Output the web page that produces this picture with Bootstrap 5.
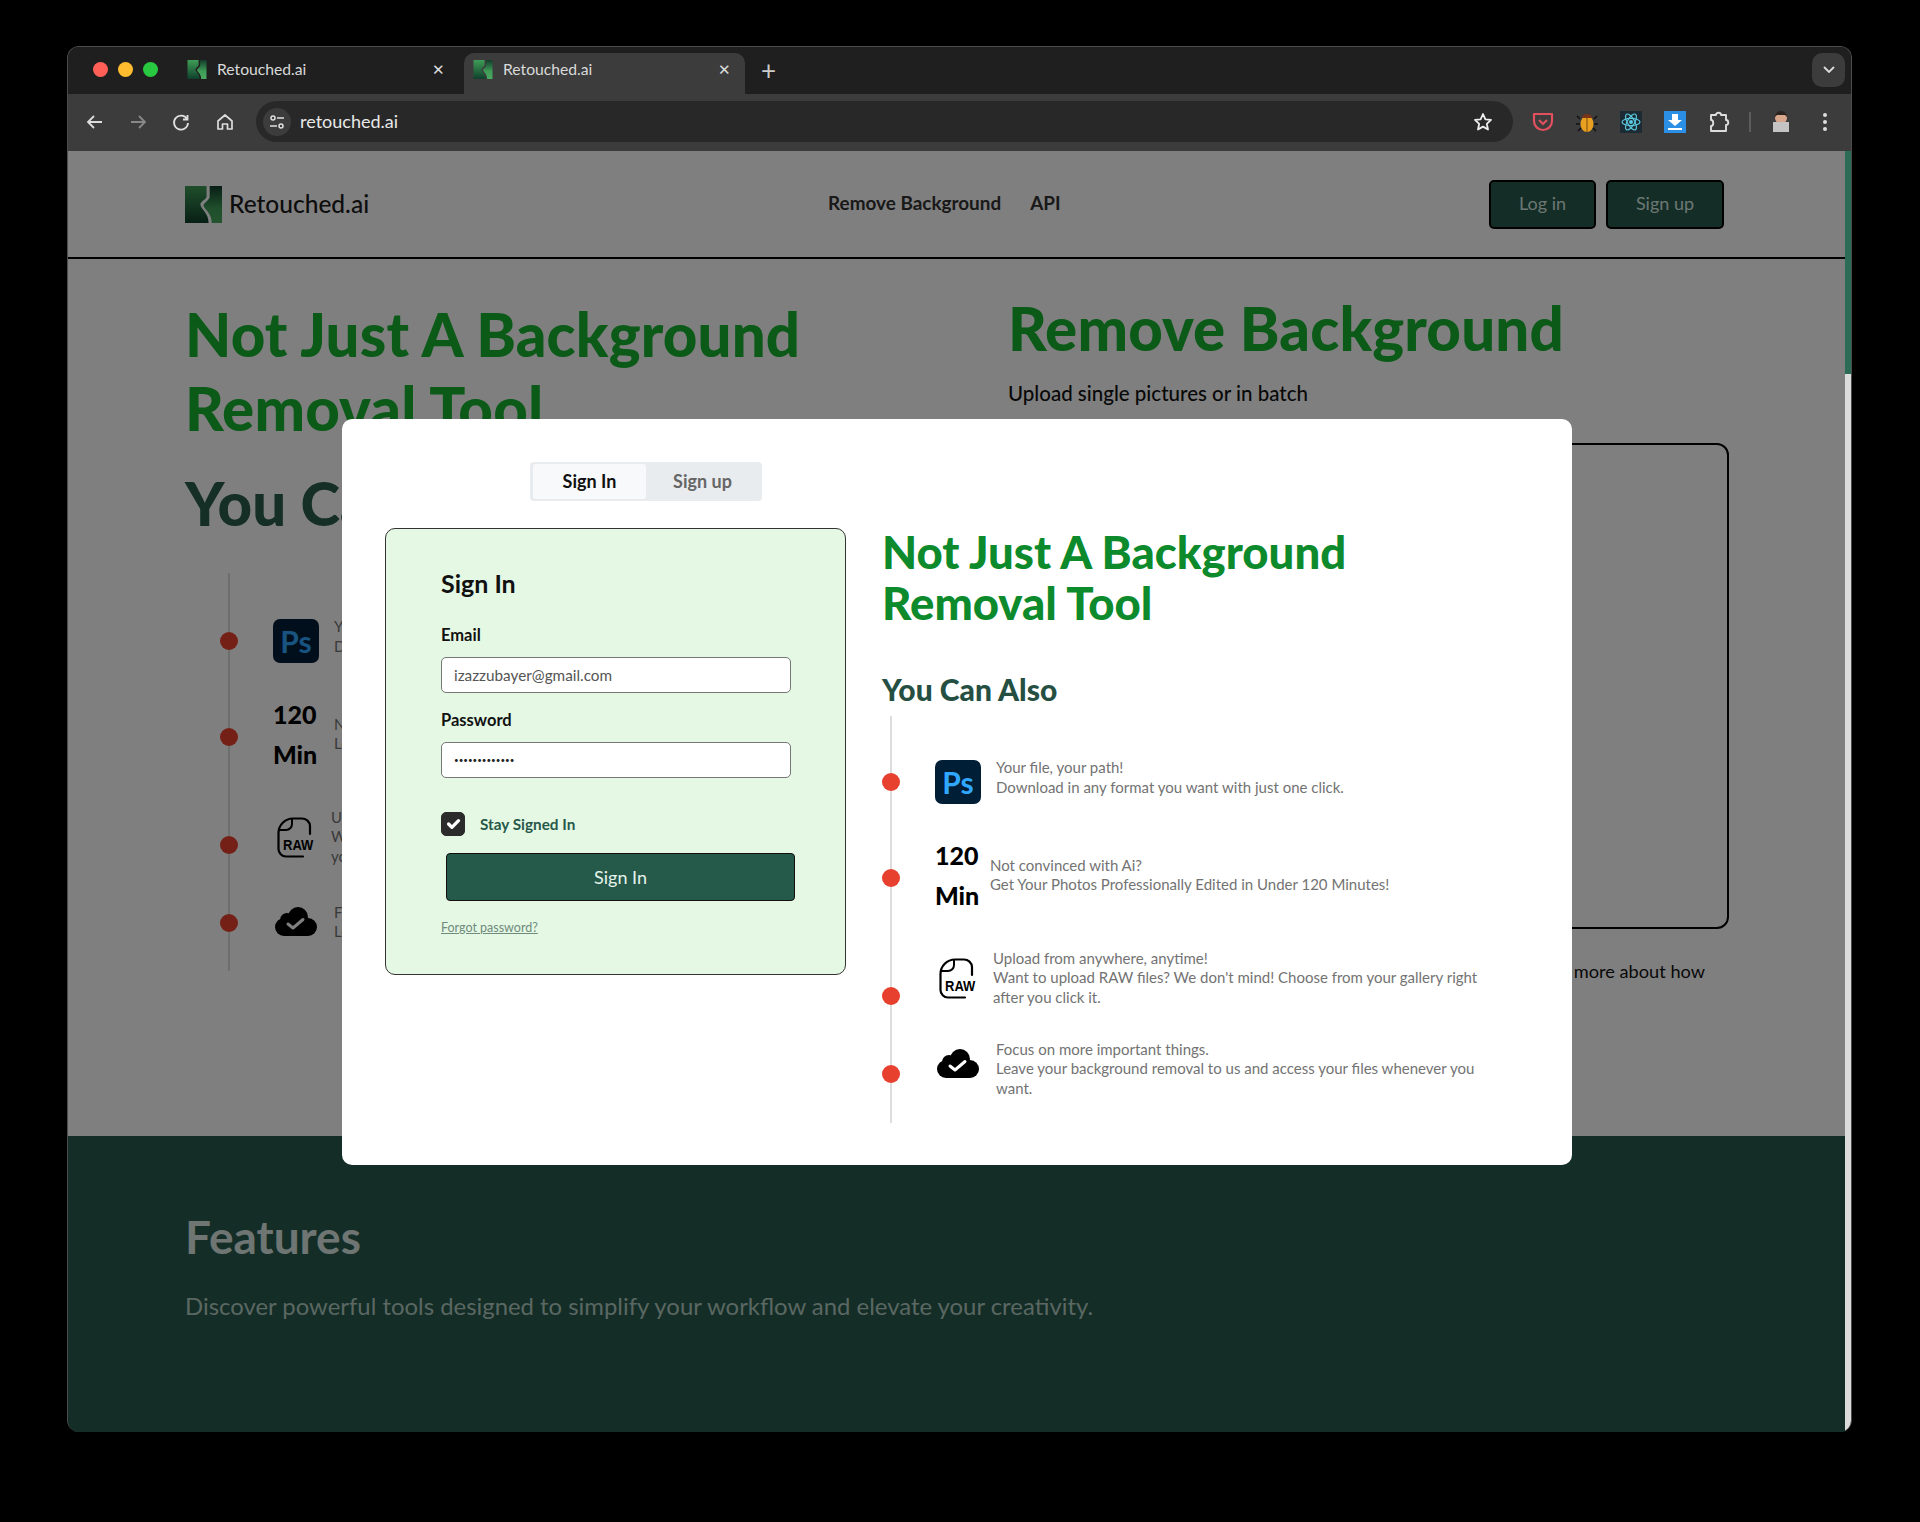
<!DOCTYPE html>
<html lang="en">
<head>
  <meta charset="UTF-8" />
  <meta name="viewport" content="width=device-width, initial-scale=1.0" />
  <title>Retouched.ai</title>
  <link href="https://cdn.jsdelivr.net/npm/bootstrap@5.3.0/dist/css/bootstrap.min.css" rel="stylesheet" />
  <style>
    body { background: #000; font-family: "Lato", sans-serif; margin: 0; padding: 46px 67px 90px; }
    .app-window { width: 1785px; height: 1386px; border-radius: 12px; overflow: hidden; border: 1px solid #4c4c4c; border-bottom: 0; background: #1f1f1f; }

    /* browser chrome */
    .tab-strip { height: 47px; background: #1f1f1f; padding-right: 6px; }
    .traffic { width: 110px; padding-left: 25px; gap: 10px; height: 45px; }
    .traffic span { width: 15px; height: 15px; border-radius: 50%; }
    .light-r { background: #ff5f57; }
    .light-y { background: #febc2e; }
    .light-g { background: #28c840; }
    .chrome-tab { width: 281px; height: 41px; margin-right: 5px; padding: 0 14px 8px 9px; color: #d9d9d9; font-size: 15.700px; border-radius: 10px 10px 0 0; }
    .chrome-tab.is-active { background: #3c3c3c; }
    .chrome-tab svg { width: 20px; height: 19px; margin-right: 10px; }
    .tab-close { margin-left: auto; font-size: 15px; color: #ddd; }
    .tab-plus { font-size: 26px; color: #ccc; margin-left: 11px; padding-bottom: 11px; line-height: 1; }
    .tab-menu { width: 33px; height: 34px; background: #3c3c3c; border-radius: 10px; margin-bottom: 7px; }
    .tool-bar { height: 57px; background: #3c3c3c; padding: 0 0 2px 16.500px; }
    .tool-btn { width: 43.400px; }
    .tool-btn svg { display: block; }
    .addr-bar { width: 1257px; height: 41px; margin-left: -2px; background: #282828; border-radius: 21px; padding: 0 20px 0 7px; color: #e8e8e8; font-size: 18px; }
    .addr-tune { width: 28px; height: 28px; border-radius: 50%; background: #3c3c3c; margin-right: 9px; }
    .ext-list { margin-left: 8px; }
    .ext-btn { width: 44px; }
    .ext-btn svg { display: block; margin: 0 auto; }
    .ext-sep { width: 2px; height: 20px; background: #5c5c5c; margin: 0 8px; }

    /* site */
    .page-area { height: 1281px; }
    .page-scroll { width: 6px; background: #dcdcdc; }
    .page-thumb { height: 223px; background: #2c6c56; }
    .site-nav { height: 108px; background: #fff; border-bottom: 2px solid #000; padding: 0 121px 0 117px; }
    .brand-name { font-size: 24.500px; color: #1a1a1a; margin-left: 7px; font-weight: 500; }
    .site-link { font-size: 18.900px; font-weight: 700; color: #333; margin-right: 25px; text-decoration: none; }
    .site-links { margin-left: 459px; margin-bottom: 2px; }
    .btn-site { background: #285a4c; border: 2px solid #000; border-radius: 5px; height: 49px; padding-bottom: 8px; font-size: 18px; color: #d8ece4; }
    .btn-site-a { width: 107px; margin-right: 10px; }
    .btn-site-b { width: 118px; }
    .hero { height: 877px; background: #fff; padding: 38px 0 0 117px; }
    .hero-left { width: 823px; }
    .hero-title { font-size: 60px; line-height: 74px; font-weight: 900; letter-spacing: .15px; color: #16b430; margin: 0; }
    .hero-also { font-size: 60px; line-height: 60px; font-weight: 900; color: #2a5c4d; margin: 28px 0 40px; }
    .hero-right { width: 721px; margin-top: -6px; }
    .hero-sub { font-size: 20.500px; font-weight: 500; color: #111; margin: 13px 0 34px; }
    .drop-box { height: 486px; border: 2.500px solid #000; border-radius: 12px; }
    .hero-note { font-size: 18.200px; color: #111; margin-top: 29px; padding-right: 24px; text-align: right; }
    .site-foot { height: 297px; background: #285a4c; padding: 74px 0 0 117px; }
    .foot-title { font-size: 46px; font-weight: 700; color: #dcebe6; margin: 0 0 24px; line-height: 54px; }
    .foot-text { font-size: 23.900px; color: #b4cec4; margin: 0; }

    /* timeline, same block on the page and in the dialog */
    .time-line { display: flow-root; }
    .time-line::before { content: ""; position: absolute; left: 8px; top: 0; bottom: 0; width: 2px; background: #ddd; }
    .time-row { z-index: 1; }
    .time-dot { width: 18px; height: 18px; border-radius: 50%; background: #e8402f; margin-right: 35px; flex: none; }
    .time-ico { flex: none; color: #000; }
    .time-txt { font-size: 15px; line-height: 19.400px; color: #737373; white-space: nowrap; }
    .ps-ico { width: 46px; height: 44px; border-radius: 7px; background: #001e36; color: #31a8ff; font-size: 30px; font-weight: 700; line-height: 1; }
    .min-ico { font-size: 25px; line-height: 40px; font-weight: 900; color: #000; }
    .w-ps { width: 61px; }
    .w-min { width: 55px; }
    .w-raw { width: 58px; padding-left: 4px; }
    .w-cloud { width: 61px; padding-left: 2px; }
    .rows-page { margin-left: 35px; height: 398px; }
    .rows-page .r1 { height: 46px; margin-top: 45px; }
    .rows-page .r2 { height: 80px; margin-top: 30px; }
    .rows-page .r3 { height: 60px; margin-top: 33px; }
    .rows-page .r4 { height: 58px; margin-top: 26px; }
    .rows-modal { height: 407px; }
    .rows-modal .r1 { height: 46px; margin-top: 43px; }
    .rows-modal .r2 { height: 80px; margin-top: 30px; }
    .rows-modal .r3 { height: 60px; margin-top: 33px; }
    .rows-modal .r4 { height: 58px; margin-top: 32px; }
    .r2 .time-dot { margin-top: 6px; }
    .rows-page .r3 .time-dot { margin-top: 16px; }
    .rows-modal .r3 .time-dot { margin-top: 36px; }
    .rows-page .r4 .time-dot { margin-top: 2px; }
    .rows-modal .r4 .time-dot { margin-top: 10px; }
    .r1 .time-txt { margin-top: -9px; }
    .rows-page .r4 .time-ico { margin-top: -2px; }
    .rows-modal .r4 .time-ico { margin-top: -12px; }

    /* dialog */
    .dim-layer { background: rgba(0, 0, 0, .5); z-index: 5; }
    .auth-dialog { z-index: 6; left: 274px; top: 268px; width: 1230px; height: 746px; background: #fff; border-radius: 10px; padding: 43px 82px 0 43px; }
    .auth-tabs { width: 232px; height: 39px; margin-left: 145px; margin-bottom: 27px; background: #e9ecef; border-radius: 4px; padding: 2px 3px; }
    .auth-tab { flex: 1; font-size: 18px; font-weight: 700; color: #666; line-height: 35px; text-align: center; border-radius: 3px; }
    .auth-tab.is-on { background: #f8f9fa; color: #111; flex: 0 0 113px; }
    .auth-card { width: 461px; height: 447px; background: #e5f8e4; border: 1.500px solid #333; border-radius: 10px; padding: 36px 54px 0 55px; margin-right: 36px; }
    .auth-title { font-size: 25px; font-weight: 700; color: #111; line-height: 36px; margin: 0 0 22px; }
    .auth-label { font-size: 16.500px; font-weight: 700; color: #111; line-height: 24px; margin: 0 0 10px; display: block; }
    .auth-input { height: 36px; border: 1.500px solid #777; border-radius: 5px; font-size: 15.300px; color: #555; padding: 0 12px; margin-bottom: 15px; font-family: "Lato", sans-serif; }
    .auth-pass { font-size: 8px; color: #222; }
    .auth-check { gap: 15px; margin-top: 34px; margin-bottom: 17px; padding: 0; }
    .auth-check .form-check-input { width: 24px; height: 24px; margin: 0; float: none; border-radius: 5px; background-color: #2b2b2b; border-color: #2b2b2b; }
    .auth-check label { font-size: 15.300px; font-weight: 700; color: #27594a; }
    .btn-auth { display: block; width: 349px; height: 48px; margin-left: 5px; background: #25594a; border: 1.500px solid #111; border-radius: 4px; color: #e6f5ec; font-size: 18px; }
    .auth-forgot { display: inline-block; margin-top: 18px; font-size: 12.500px; color: #6f8b7e; }
    .pitch-title { font-size: 45.500px; line-height: 51px; font-weight: 900; color: #0c8a2c; margin: -2px 0 42px; }
    .pitch-also { font-size: 30px; line-height: 38px; font-weight: 900; color: #244f42; margin: 0 0 8px; }
  </style>
</head>
<body>
  <svg width="0" height="0" class="position-absolute">
    <defs>
      <linearGradient id="logoA" x1="0" y1="0" x2="0" y2="1"><stop offset="0" stop-color="#3f9d57"/><stop offset="1" stop-color="#0f3f2c"/></linearGradient>
      <linearGradient id="logoB" x1="0" y1="0" x2="0" y2="1"><stop offset="0" stop-color="#123c2b"/><stop offset=".6" stop-color="#3f9d57"/><stop offset="1" stop-color="#4aa862"/></linearGradient>
    </defs>
    <symbol id="i-logo" viewBox="0 0 36 36">
      <path fill="url(#logoA)" d="M0 0H21V10C21 13 15 15 15 18C15 22 23 26 23 36H0Z"/>
      <path fill="url(#logoB)" d="M24 0H36V36H26C26 26 18 22 18 19C18 16.500 24 14 24 10Z"/>
    </symbol>
    <symbol id="i-raw" viewBox="0 0 38 41">
      <path fill="none" stroke="#000" stroke-width="2.200" stroke-linecap="round" d="M33 17V9A8 8 0 0 0 25 1.500H16C8 1.500 1.500 8 1.500 16V32A7.500 7.500 0 0 0 9 39.500H26"/>
      <path fill="none" stroke="#000" stroke-width="2" d="M15 1.500V7A6 6 0 0 1 9 13H1.500"/>
    </symbol>
    <symbol id="i-cloud" viewBox="0 0 42 29">
      <g fill="#000"><circle cx="23" cy="10" r="10"/><circle cx="12" cy="13" r="7"/><circle cx="9" cy="20" r="9"/><circle cx="33" cy="20" r="9"/><rect x="9" y="14" width="24" height="15"/></g>
      <path fill="none" stroke="#fff" stroke-width="3" stroke-linecap="round" stroke-linejoin="round" d="M13 17L18 21L28 12.500"/>
    </symbol>
  </svg>

  <div class="app-window d-flex flex-column">
    <div class="tab-strip d-flex align-items-end">
      <div class="traffic d-flex align-items-center align-self-start">
        <span class="light-r"></span><span class="light-y"></span><span class="light-g"></span>
      </div>
      <div class="chrome-tab d-flex align-items-center">
        <svg><use href="#i-logo"/></svg>Retouched.ai<span class="tab-close">✕</span>
      </div>
      <div class="chrome-tab is-active d-flex align-items-center">
        <svg><use href="#i-logo"/></svg>Retouched.ai<span class="tab-close">✕</span>
      </div>
      <div class="tab-plus">+</div>
      <div class="tab-menu ms-auto d-flex align-items-center justify-content-center">
        <svg width="12" height="8" viewBox="0 0 12 8"><path d="M1.500 1.500L6 6L10.500 1.500" fill="none" stroke="#ddd" stroke-width="1.800" stroke-linecap="round"/></svg>
      </div>
    </div>

    <div class="tool-bar d-flex align-items-center">
      <div class="tool-btn"><svg width="20" height="20" viewBox="0 0 20 20"><path d="M17 10H3M9 4L3 10L9 16" fill="none" stroke="#ddd" stroke-width="1.800"/></svg></div>
      <div class="tool-btn"><svg width="20" height="20" viewBox="0 0 20 20"><path d="M3 10H17M11 4L17 10L11 16" fill="none" stroke="#888" stroke-width="1.800"/></svg></div>
      <div class="tool-btn"><svg width="20" height="20" viewBox="0 0 20 20"><path d="M16 7A7 7 0 1 0 17 11M16.500 3V7.500H12" fill="none" stroke="#ddd" stroke-width="1.800"/></svg></div>
      <div class="tool-btn"><svg width="20" height="20" viewBox="0 0 20 20"><path d="M3 9L10 3L17 9V17H12.500V12H7.500V17H3Z" fill="none" stroke="#ddd" stroke-width="1.700" stroke-linejoin="round"/></svg></div>
      <div class="addr-bar d-flex align-items-center">
        <div class="addr-tune d-flex align-items-center justify-content-center">
          <svg width="16" height="16" viewBox="0 0 16 16"><g fill="none" stroke="#e0e0e0" stroke-width="1.500"><circle cx="4" cy="4" r="2"/><circle cx="12" cy="12" r="2"/><path d="M8 4H15M1 12H8"/></g></svg>
        </div>
        <span>retouched.ai</span>
        <svg class="ms-auto" width="20" height="20" viewBox="0 0 20 20"><path d="M10 2L12.400 7.300L18 7.900L13.800 11.800L15 17.500L10 14.600L5 17.500L6.200 11.800L2 7.900L7.600 7.300Z" fill="none" stroke="#eee" stroke-width="1.800" stroke-linejoin="round"/></svg>
      </div>
      <div class="ext-list d-flex align-items-center">
        <div class="ext-btn"><svg width="22" height="22" viewBox="0 0 22 22"><path d="M2 3H20V10A9 9 0 0 1 2 10Z" fill="none" stroke="#e0505e" stroke-width="2.200" stroke-linejoin="round"/><path d="M7 9L11 13L15 9" fill="none" stroke="#e0505e" stroke-width="2.200"/></svg></div>
        <div class="ext-btn"><svg width="22" height="22" viewBox="0 0 22 22"><path d="M4 8L1 5M4 13H0M5 17L2 20M18 8L21 5M18 13H22M17 17L20 20" stroke="#111" stroke-width="1.500"/><ellipse cx="11" cy="13" rx="6.500" ry="8" fill="#e8a020"/><path d="M6 7A5 4 0 0 1 16 7Z" fill="#7a3318"/><path d="M11 6V21" stroke="#7a4a10"/></svg></div>
        <div class="ext-btn"><svg width="22" height="22" viewBox="0 0 22 22"><rect width="22" height="22" fill="#1c2b33"/><g fill="none" stroke="#5bc8df" stroke-width="1.200"><ellipse cx="11" cy="11" rx="9" ry="3.600"/><ellipse cx="11" cy="11" rx="9" ry="3.600" transform="rotate(60 11 11)"/><ellipse cx="11" cy="11" rx="9" ry="3.600" transform="rotate(120 11 11)"/></g><circle cx="11" cy="11" r="2" fill="#5bc8df"/></svg></div>
        <div class="ext-btn"><svg width="22" height="22" viewBox="0 0 22 22"><rect width="22" height="22" fill="#2b8fe6"/><path d="M8 3H14V9H18L11 15L4 9H8Z" fill="#fff"/><rect x="4" y="17" width="14" height="2" fill="#fff"/></svg></div>
        <div class="ext-btn"><svg width="22" height="22" viewBox="0 0 22 22"><path d="M3 4H8C8 1 13 1 13 4H18V9C21 9 21 14 18 14V20H3V15C6 15 6 9 3 9Z" fill="none" stroke="#ddd" stroke-width="1.900" stroke-linejoin="round"/></svg></div>
        <div class="ext-sep"></div>
        <div class="ext-btn"><svg width="22" height="24" viewBox="0 0 22 24"><circle cx="11" cy="8" r="6" fill="#d9a88c"/><path d="M5 7A6 6 0 0 1 17 7L15 5H7Z" fill="#2a2320"/><path d="M3 12H19V22H3Z" fill="#c4c4c4"/></svg></div>
        <div class="ext-btn"><svg width="6" height="20" viewBox="0 0 6 20"><circle cx="3" cy="3" r="2" fill="#ddd"/><circle cx="3" cy="10" r="2" fill="#ddd"/><circle cx="3" cy="17" r="2" fill="#ddd"/></svg></div>
      </div>
    </div>

    <div class="page-area d-flex">
      <div class="flex-grow-1 position-relative">
        <nav class="site-nav d-flex align-items-center">
          <svg width="37" height="37"><use href="#i-logo"/></svg>
          <span class="brand-name">Retouched.ai</span>
          <div class="site-links">
            <a class="site-link" href="#">Remove Background</a>
            <a class="site-link" href="#">API</a>
          </div>
          <div class="ms-auto d-flex">
            <button class="btn btn-site btn-site-a">Log in</button>
            <button class="btn btn-site btn-site-b">Sign up</button>
          </div>
        </nav>

        <section class="hero d-flex">
          <div class="hero-left">
            <h1 class="hero-title">Not Just A Background<br>Removal Tool</h1>
            <h2 class="hero-also">You Can Also</h2>
            <div class="time-line rows-page position-relative">
              <div class="time-row r1 d-flex align-items-center position-relative">
                <span class="time-dot"></span>
                <div class="time-ico w-ps"><div class="ps-ico d-flex align-items-center justify-content-center">Ps</div></div>
                <div class="time-txt">Your file,<br>Download</div>
              </div>
              <div class="time-row r2 d-flex align-items-center position-relative">
                <span class="time-dot"></span>
                <div class="time-ico w-ps min-ico">120<br>Min</div>
                <div class="time-txt">Not<br>Let</div>
              </div>
              <div class="time-row r3 d-flex align-items-center position-relative">
                <span class="time-dot"></span>
                <div class="time-ico w-raw">
                  <svg class="d-block" width="38" height="41" viewBox="0 0 38 41"><use href="#i-raw"/><text transform="translate(6 33) scale(1 1.150)" font-family="Liberation Sans, sans-serif" font-weight="700" font-size="13" fill="#000">RAW</text></svg>
                </div>
                <div class="time-txt">Upload<br>Want<br>your</div>
              </div>
              <div class="time-row r4 d-flex align-items-center position-relative">
                <span class="time-dot"></span>
                <div class="time-ico w-cloud"><svg class="d-block" width="42" height="29"><use href="#i-cloud"/></svg></div>
                <div class="time-txt">Focus<br>Leave</div>
              </div>
            </div>
          </div>
          <div class="hero-right">
            <h1 class="hero-title">Remove Background</h1>
            <p class="hero-sub">Upload single pictures or in batch</p>
            <div class="drop-box"></div>
            <p class="hero-note">more about how</p>
          </div>
        </section>

        <footer class="site-foot">
          <h2 class="foot-title">Features</h2>
          <p class="foot-text">Discover powerful tools designed to simplify your workflow and elevate your creativity.</p>
        </footer>

        <div class="dim-layer position-absolute top-0 start-0 w-100 h-100"></div>

        <div class="auth-dialog position-absolute">
          <div class="auth-tabs d-flex">
            <div class="auth-tab is-on">Sign In</div>
            <div class="auth-tab">Sign up</div>
          </div>
          <div class="d-flex">
            <form class="auth-card">
              <h3 class="auth-title">Sign In</h3>
              <label class="auth-label" for="authEmail">Email</label>
              <input class="form-control auth-input" id="authEmail" type="email" value="izazzubayer@gmail.com" />
              <label class="auth-label" for="authPass">Password</label>
              <input class="form-control auth-input auth-pass" id="authPass" type="password" value="aaaaaaaaaaaaa" />
              <div class="form-check auth-check d-flex align-items-center">
                <input class="form-check-input" id="authStay" type="checkbox" checked />
                <label class="form-check-label" for="authStay">Stay Signed In</label>
              </div>
              <button type="button" class="btn btn-auth">Sign In</button>
              <a class="auth-forgot" href="#">Forgot password?</a>
            </form>
            <div class="flex-grow-1">
              <h2 class="pitch-title">Not Just A Background<br>Removal Tool</h2>
              <h3 class="pitch-also">You Can Also</h3>
              <div class="time-line rows-modal position-relative">
                <div class="time-row r1 d-flex align-items-center position-relative">
                  <span class="time-dot"></span>
                  <div class="time-ico w-ps"><div class="ps-ico d-flex align-items-center justify-content-center">Ps</div></div>
                  <div class="time-txt">Your file, your path!<br>Download in any format you want with just one click.</div>
                </div>
                <div class="time-row r2 d-flex align-items-center position-relative">
                  <span class="time-dot"></span>
                  <div class="time-ico w-min min-ico">120<br>Min</div>
                  <div class="time-txt">Not convinced with Ai?<br>Get Your Photos Professionally Edited in Under 120 Minutes!</div>
                </div>
                <div class="time-row r3 d-flex align-items-center position-relative">
                  <span class="time-dot"></span>
                  <div class="time-ico w-raw">
                    <svg class="d-block" width="38" height="41" viewBox="0 0 38 41"><use href="#i-raw"/><text transform="translate(6 33) scale(1 1.150)" font-family="Liberation Sans, sans-serif" font-weight="700" font-size="13" fill="#000">RAW</text></svg>
                  </div>
                  <div class="time-txt">Upload from anywhere, anytime!<br>Want to upload RAW files? We don't mind! Choose from your gallery right<br>after you click it.</div>
                </div>
                <div class="time-row r4 d-flex align-items-center position-relative">
                  <span class="time-dot"></span>
                  <div class="time-ico w-cloud"><svg class="d-block" width="42" height="29"><use href="#i-cloud"/></svg></div>
                  <div class="time-txt">Focus on more important things.<br>Leave your background removal to us and access your files whenever you<br>want.</div>
                </div>
              </div>
            </div>
          </div>
        </div>
      </div>
      <div class="page-scroll"><div class="page-thumb"></div></div>
    </div>
  </div>

  <script src="https://cdn.jsdelivr.net/npm/bootstrap@5.3.0/dist/js/bootstrap.bundle.min.js"></script>
</body>
</html>
